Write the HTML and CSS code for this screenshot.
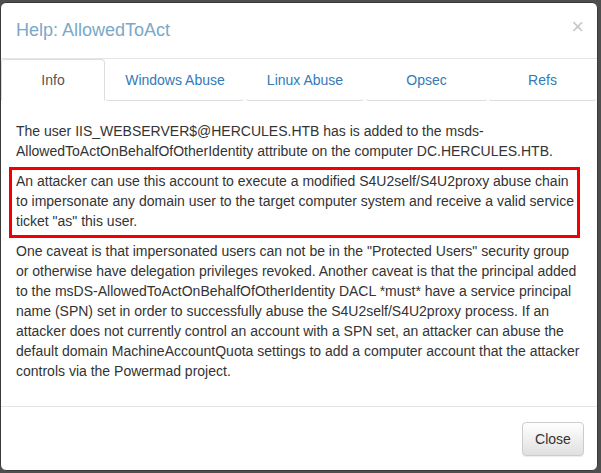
FILE: index.html
```html
<!DOCTYPE html>
<html>
<head>
<meta charset="utf-8">
<link rel="stylesheet" href="styles.css">
</head>
<body>
<div class="modal">
  <div class="modal-header">
    <button class="close" type="button">×</button>
    <h4 class="modal-title">Help: AllowedToAct</h4>
  </div>
  <ul class="tabs">
    <li class="tab active">Info</li>
    <li class="tab">Windows Abuse</li>
    <li class="tab">Linux Abuse</li>
    <li class="tab">Opsec</li>
    <li class="tab">Refs</li>
  </ul>
  <div class="tab-content">
    <p>The user IIS_WEBSERVER$@HERCULES.HTB has is added to the msds-AllowedToActOnBehalfOfOtherIdentity attribute on the computer DC.HERCULES.HTB.</p>
    <p class="marked">An attacker can use this account to execute a modified S4U2self/S4U2proxy abuse chain to impersonate any domain user to the target computer system and receive a valid service ticket "as" this user.</p>
    <p>One caveat is that impersonated users can not be in the "Protected Users" security group or otherwise have delegation privileges revoked. Another caveat is that the principal added to the msDS-AllowedToActOnBehalfOfOtherIdentity DACL *must* have a service principal name (SPN) set in order to successfully abuse the S4U2self/S4U2proxy process. If an attacker does not currently control an account with a SPN set, an attacker can abuse the default domain MachineAccountQuota settings to add a computer account that the attacker controls via the Powermad project.</p>
  </div>
  <div class="modal-footer">
    <button class="btn" type="button">Close</button>
  </div>
</div>
</body>
</html>
```
FILE: styles.css
```css
html, body {
  margin: 0;
  padding: 0;
  background: #4e4e4e;
  height: 473px;
  overflow: hidden;
}
body {
  font-family: "Liberation Sans", Arial, Helvetica, sans-serif;
  font-size: 14px;
  line-height: 20px;
  color: #333;
}
.modal {
  margin: 2px 3px 0 0;
  height: 469px;
  box-sizing: border-box;
  background: #fff;
  border: 1px solid #3a3a3a;
  border-radius: 6px;
  display: flex;
  flex-direction: column;
  overflow: hidden;
}
.modal-header {
  padding: 15px;
  border-bottom: 1px solid #e5e5e5;
  height: 25px;
}
.modal-title {
  margin: 0;
  font-size: 18px;
  font-weight: normal;
  line-height: 25px;
  color: #7aa8c6;
}
.close {
  float: right;
  margin: -2px -2px 0 0;
  padding: 0;
  border: 0;
  background: transparent;
  font-family: "Liberation Sans", Arial, sans-serif;
  font-size: 22px;
  font-weight: normal;
  line-height: 22px;
  color: #000;
  opacity: 0.22;
}
.tabs {
  list-style: none;
  margin: 0;
  padding: 0;
  display: grid;
  grid-template-columns: 104px 140px 120px 123px 109px;
}
.tab {
  padding: 10px 0;
  text-align: center;
  color: #337ab7;
  border: 1px solid transparent;
  border-bottom-color: #ddd;
  border-radius: 0 0 4px 4px;
  line-height: 20px;
}
.tab.active {
  color: #555;
  border-color: #ddd;
  border-bottom-color: transparent;
  border-radius: 4px 4px 0 0;
}
.tab-content {
  padding: 20px 15px 0 15px;
  flex: 1;
  border-bottom: 1px solid #e5e5e5;
}
.tab-content p {
  margin: 0 0 10px;
}
.marked {
  position: relative;
}
.marked::after {
  content: "";
  position: absolute;
  left: -7px;
  right: 2px;
  top: -4px;
  bottom: -7px;
  border: 3px solid #f00000;
}
.modal-footer {
  padding: 15px 13px 14px 15px;
  display: flex;
  justify-content: flex-end;
}
.btn {
  font-family: "Liberation Sans", Arial, sans-serif;
  font-size: 14px;
  line-height: 20px;
  color: #333;
  padding: 6px 12px;
  border: 1px solid #ccc;
  border-radius: 4px;
  background: linear-gradient(to bottom, #fff 0, #e0e0e0 100%);
  box-shadow: inset 0 1px 0 rgba(255,255,255,.15), 0 1px 1px rgba(0,0,0,.075);
  width: 62px;
  height: 34px;
}
```
